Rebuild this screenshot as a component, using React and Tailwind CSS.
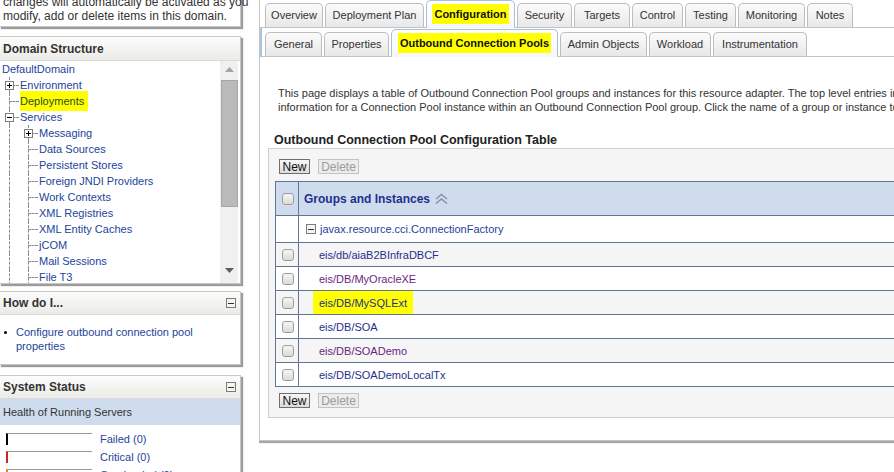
import React from "react";

const LINK = "text-[#23449a]";
const NAVY = "text-[#1f2f8c]";
const PURPLE = "text-[#6b1f80]";

const MinusBox = () => (
    <span className="w-[10px] h-[10px] border border-[#7a7a7a] bg-[#f4f4f0] flex items-center justify-center">
        <span className="w-[6px] h-px bg-[#333]" />
    </span>
);

const TreeBox = ({ plus }) => (
    <span className="absolute w-[9px] h-[9px] border border-[#7c7c7c] bg-white flex items-center justify-center">
        <span className="w-[5px] h-px bg-black" />
        {plus && <span className="absolute w-px h-[5px] bg-black" />}
    </span>
);

const treeItems = [
    { label: "DefaultDomain", depth: 0 },
    { label: "Environment", depth: 1, box: "plus" },
    { label: "Deployments", depth: 1, hl: true },
    { label: "Services", depth: 1, box: "minus" },
    { label: "Messaging", depth: 2, box: "plus" },
    { label: "Data Sources", depth: 2 },
    { label: "Persistent Stores", depth: 2 },
    { label: "Foreign JNDI Providers", depth: 2 },
    { label: "Work Contexts", depth: 2 },
    { label: "XML Registries", depth: 2 },
    { label: "XML Entity Caches", depth: 2 },
    { label: "jCOM", depth: 2 },
    { label: "Mail Sessions", depth: 2 },
    { label: "File T3", depth: 2 },
];

const TreeRow = ({ item }) => {
    if (item.depth === 0) {
        return (
            <div className={`h-[16px] flex items-center pl-[2px] ${LINK}`}>{item.label}</div>
        );
    }
    const deep = item.depth === 2;
    return (
        <div className="h-[16px] flex items-center whitespace-nowrap">
            <span className={`relative h-full shrink-0 ${deep ? "w-[39px]" : "w-[20px]"}`}>
                <span className="absolute left-[9px] top-0 bottom-0 border-l border-dashed border-[#8c8c8c]" />
                {deep && (
                    <span className="absolute left-[28px] top-0 bottom-0 border-l border-dashed border-[#8c8c8c]" />
                )}
                <span
                    className={`absolute top-[8px] right-[1px] border-t border-dashed border-[#8c8c8c] ${
                        deep ? "left-[28px]" : "left-[9px]"
                    }`}
                />
                {item.box && (
                    <span className={`absolute top-[4px] ${deep ? "left-[24px]" : "left-[5px]"}`}>
                        <TreeBox plus={item.box === "plus"} />
                    </span>
                )}
            </span>
            {item.hl ? (
                <span className="bg-[#ffff00] text-[#2b4a2a] py-[3px] pr-[4px]">{item.label}</span>
            ) : (
                <span className={LINK}>{item.label}</span>
            )}
        </div>
    );
};

const Panel = ({ title, collapse, children, className = "" }) => (
    <div
        className={`-ml-px w-[242px] bg-white border border-[#c8c8c8] shadow-[2px_2px_1px_#9c9c9c] ${className}`}
    >
        <div
            className={`flex items-center justify-between pl-[3px] pr-[4px] bg-gradient-to-b from-[#fcfcfb] to-[#ebebe7] border-b border-[#dadad6] font-bold text-[12px] text-[#333] ${
                collapse ? "h-[23px]" : "h-[24px]"
            }`}
        >
            <span>{title}</span>
            {collapse && <MinusBox />}
        </div>
        {children}
    </div>
);

const topTabs = [
    { label: "Overview", w: "w-[58px]" },
    { label: "Deployment Plan", w: "w-[99px]" },
    { label: "Configuration", w: "w-[89px]", active: true },
    { label: "Security", w: "w-[55px]" },
    { label: "Targets", w: "w-[56px]" },
    { label: "Control", w: "w-[51px]" },
    { label: "Testing", w: "w-[51px]" },
    { label: "Monitoring", w: "w-[67px]" },
    { label: "Notes", w: "w-[46px]" },
];

const subTabs = [
    { label: "General", w: "w-[57px]" },
    { label: "Properties", w: "w-[65px]" },
    { label: "Outbound Connection Pools", w: "w-[167px]", active: true },
    { label: "Admin Objects", w: "w-[87px]" },
    { label: "Workload", w: "w-[62px]" },
    { label: "Instrumentation", w: "w-[94px]" },
];

const Tab = ({ tab }) =>
    tab.active ? (
        <div
            className={`${tab.w} h-[28px] -mb-px pb-[2px] relative flex items-center justify-center rounded-t-[5px] border border-b-0 border-[#a8c0da] bg-gradient-to-b from-white to-[#f4f7fb] font-bold text-[#111]`}
        >
            <span className="bg-[#ffff00] px-[2px] py-[3px]">{tab.label}</span>
        </div>
    ) : (
        <div
            className={`${tab.w} h-[24px] pb-[2px] flex items-center justify-center rounded-t-[5px] border border-b-0 border-[#bdbdbd] bg-gradient-to-b from-[#fbfbfb] to-[#e8e8e8] text-[#333]`}
        >
            {tab.label}
        </div>
    );

const tableRows = [
    { name: "eis/db/aiaB2BInfraDBCF", color: NAVY, bg: "bg-[#f5f5f5]" },
    { name: "eis/DB/MyOracleXE", color: PURPLE, bg: "bg-white" },
    { name: "eis/DB/MySQLExt", color: NAVY, bg: "bg-[#f5f5f5]", hl: true },
    { name: "eis/DB/SOA", color: NAVY, bg: "bg-white" },
    { name: "eis/DB/SOADemo", color: PURPLE, bg: "bg-[#f5f5f5]" },
    { name: "eis/DB/SOADemoLocalTx", color: NAVY, bg: "bg-white" },
];

const CheckBox = () => (
    <span className="w-[12px] h-[12px] rounded-[3px] border border-[#9d9d9d] bg-gradient-to-b from-[#f6f6f6] to-[#dadada]" />
);

const Buttons = () => (
    <div className="flex items-center gap-[8px] pl-[10px] text-[12px]">
        <button className="h-[15px] w-[31px] flex items-center justify-center border border-[#6f6f6f] bg-gradient-to-b from-[#f8f8f8] to-[#dcdcdc] text-[#111] leading-none">
            New
        </button>
        <button className="h-[15px] w-[41px] flex items-center justify-center border border-[#c3c3c3] bg-[#ececec] text-[#9b9b9b] leading-none">
            Delete
        </button>
    </div>
);

const SortIcon = () => (
    <svg width="15" height="12" viewBox="0 0 15 12" className="ml-[4px]">
        <polyline points="2,6 7.5,1.5 13,6" fill="none" stroke="#8594ae" strokeWidth="1.6" />
        <polyline points="2,10.5 7.5,6 13,10.5" fill="none" stroke="#8594ae" strokeWidth="1.6" />
    </svg>
);

const HealthRow = ({ label, edge }) => (
    <div className="h-[18px] flex items-center pl-[6px]">
        <span className={`w-[86px] h-[12px] border-t border-t-[#9a9a9a] border-l-2 ${edge}`} />
        <span className={`ml-[8px] ${LINK}`}>{label}</span>
    </div>
);

export default function App() {
    return (
        <div className="w-[894px] h-[472px] overflow-hidden bg-white flex font-['Liberation_Sans',Arial,sans-serif] text-[11px] leading-[14px] text-[#333]">
            {/* Left column */}
            <div className="w-[244px] shrink-0 flex flex-col">
                <div className="-ml-px -mt-[6px] w-[242px] h-[33px] shrink-0 bg-white border border-[#c8c8c8] shadow-[2px_2px_1px_#9c9c9c] pl-[3px] text-[12px] text-[#333] whitespace-nowrap">
                    <div>changes will automatically be activated as you</div>
                    <div>modify, add or delete items in this domain.</div>
                </div>

                <Panel title="Domain Structure" className="mt-[9px]">
                    <div className="h-[222px] flex">
                        <div className="flex-1 overflow-hidden">
                            {treeItems.map((item) => (
                                <TreeRow key={item.label} item={item} />
                            ))}
                        </div>
                        <div className="w-[18px] mr-[2px] bg-[#f0f0f0] flex flex-col items-center">
                            <svg width="9" height="5" viewBox="0 0 9 5" className="mt-[6px]">
                                <polygon points="0,5 4.5,0 9,5" fill="#a3a3a3" />
                            </svg>
                            <div className="mt-[8px] w-[17px] h-[127px] bg-[#bababa] border border-[#a6a6a6]" />
                            <div className="flex-1" />
                            <svg width="9" height="5" viewBox="0 0 9 5" className="mb-[10px]">
                                <polygon points="0,0 9,0 4.5,5" fill="#5e5e5e" />
                            </svg>
                        </div>
                    </div>
                </Panel>

                <Panel title="How do I..." collapse className="mt-[7px]">
                    <div className="pt-[10px] pb-[11px] flex">
                        <span className="w-[3px] h-[3px] bg-black rounded-full ml-[4px] mt-[6px] shrink-0" />
                        <span className={`ml-[9px] ${LINK}`}>
                            Configure outbound connection pool
                            <br />
                            properties
                        </span>
                    </div>
                </Panel>

                <Panel title="System Status" collapse className="mt-[10px]">
                    <div className="h-[26px] flex items-center pl-[3px] bg-[#cfdcee] text-[#333]">
                        Health of Running Servers
                    </div>
                    <div className="pt-[5px] pb-[20px]">
                        <HealthRow label="Failed (0)" edge="border-l-black" />
                        <HealthRow label="Critical (0)" edge="border-l-[#d42020]" />
                        <HealthRow label="Overloaded (0)" edge="border-l-[#e09020]" />
                    </div>
                </Panel>
            </div>

            {/* Right column */}
            <div className="flex-1 min-w-0 ml-[15px] overflow-hidden">
                <div className="w-[900px] h-[441px] border-l border-b border-[#c4c4c4] shadow-[0_2px_1px_#a8a8a8]">
                    <div className="pl-[5px] flex items-end gap-[2px] border-b border-[#c3c3c3]">
                        {topTabs.map((t) => (
                            <Tab key={t.label} tab={t} />
                        ))}
                    </div>
                    <div className="border-l-2 border-[#a9c4de] pl-[3px] pt-[1px] flex items-end gap-[2px] border-b border-b-[#c3c3c3]">
                        {subTabs.map((t) => (
                            <Tab key={t.label} tab={t} />
                        ))}
                    </div>

                    <div className="mt-[29px] pl-[18px] whitespace-nowrap">
                        <div>
                            This page displays a table of Outbound Connection Pool groups and instances for this resource adapter. The top level entries in the table are the names of Outbound Connection Pool groups.
                        </div>
                        <div>
                            information for a Connection Pool instance within an Outbound Connection Pool group. Click the name of a group or instance to view its details.
                        </div>
                    </div>

                    <div className="mt-[19px] pl-[14px] font-bold text-[12.5px] text-[#222]">
                        Outbound Connection Pool Configuration Table
                    </div>

                    <div className="ml-[8px] mt-[1px] bg-[#f5f5f5] border-t border-l border-b border-[#cfcfcf] pt-[10px] pb-[9px]">
                        <Buttons />
                        <div className="mt-[7px] ml-[6px] border-l border-t border-[#5f7697]">
                            <div className="h-[34px] flex bg-[#cfdcee] border-b border-[#5f7697]">
                                <div className="w-[23px] border-r border-[#5f7697] flex items-center pl-[6px]">
                                    <CheckBox />
                                </div>
                                <div className={`flex items-center pl-[5px] font-bold text-[12px] ${NAVY}`}>
                                    Groups and Instances
                                    <SortIcon />
                                </div>
                            </div>
                            <div className="h-[27px] flex bg-white border-b border-[#5f7697]">
                                <div className="w-[23px] border-r border-[#5f7697]" />
                                <div className={`flex items-center pl-[7px] ${LINK}`}>
                                    <MinusBox />
                                    <span className="ml-[4px]">javax.resource.cci.ConnectionFactory</span>
                                </div>
                            </div>
                            {tableRows.map((r) => (
                                <div key={r.name} className={`h-[24px] flex border-b border-[#5f7697] ${r.bg}`}>
                                    <div className="w-[23px] border-r border-[#5f7697] flex items-center pl-[6px]">
                                        <CheckBox />
                                    </div>
                                    {r.hl ? (
                                        <div className="flex pl-[14px]">
                                            <span className={`bg-[#ffff00] px-[6px] flex items-center ${r.color}`}>
                                                {r.name}
                                            </span>
                                        </div>
                                    ) : (
                                        <div className={`flex items-center pl-[20px] ${r.color}`}>
                                            {r.name}
                                        </div>
                                    )}
                                </div>
                            ))}
                        </div>
                        <div className="mt-[6px]">
                            <Buttons />
                        </div>
                    </div>
                </div>
            </div>
        </div>
    );
}
